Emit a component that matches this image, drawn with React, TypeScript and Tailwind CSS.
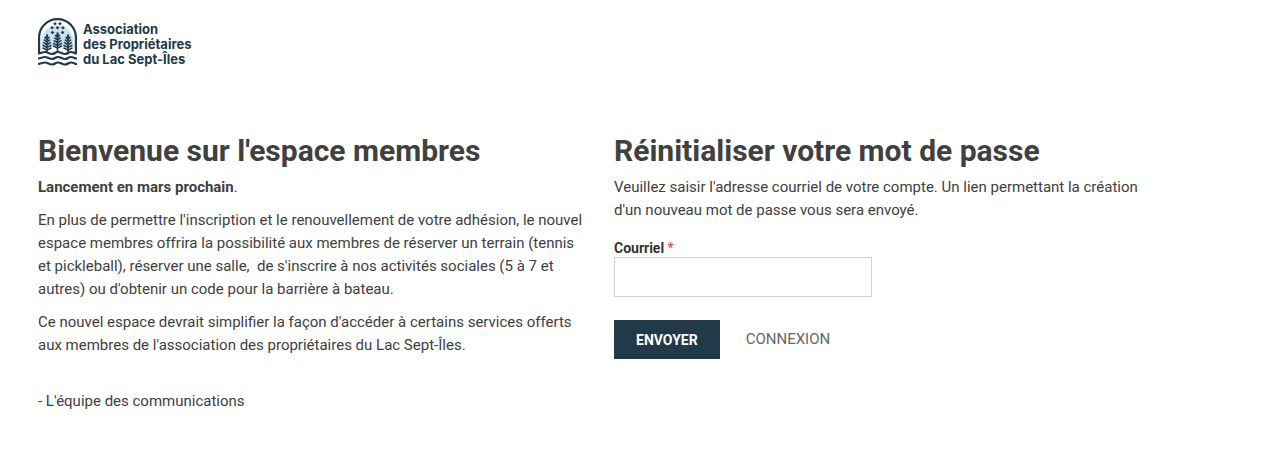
import React from 'react';

const NAVY = '#213a4a';

const TREES = [
  { x: 9, top: 16.5 },
  { x: 19.5, top: 14.5 },
  { x: 30, top: 16.5 },
];

const STARS = [
  [17, 5.7], [22, 5.7],
  [14, 9.7], [19.5, 9.7], [25, 9.7],
  [14.5, 14.5], [24.5, 14.5],
];

const Tree: React.FC<{ x: number; top: number }> = ({ x, top }) => (
  <g fill="none" stroke={NAVY}>
    <path d={`M${x} ${top}V35`} strokeWidth="1.5" />
    <path d={`M${x} ${top - 1}L${x + 1.6} ${top + 3}H${x - 1.6}Z`} fill={NAVY} stroke="none" />
    {[0, 1, 2, 3, 4].map((i) => {
      const y = top + 2.5 + i * 2.7;
      const w = Math.min(2.4 + i * 0.7, 4.5);
      return (
        <path key={i} d={`M${x - w} ${y}L${x} ${y + 2.4}L${x + w} ${y}`} strokeWidth="1.6" />
      );
    })}
  </g>
);

const LogoMark: React.FC = () => (
  <svg width="39" height="48" viewBox="0 0 39 48" fill="none" aria-hidden="true">
    <path d="M4.5 29A16 16 0 1 1 34.5 29Z" fill="#c9e2f1" />
    {STARS.map(([x, y]) => (
      <path
        key={`${x}-${y}`}
        d={`M${x} ${y - 1.8}L${x + 1.8} ${y}L${x} ${y + 1.8}L${x - 1.8} ${y}Z`}
        fill={NAVY}
      />
    ))}
    {TREES.map((tree) => (
      <Tree key={tree.x} {...tree} />
    ))}
    <g stroke={NAVY} strokeWidth="2.2">
      <path d="M1.1 36V19.5A18.4 18.4 0 0 1 37.9 19.5V36" />
      <path d="M0 35.5C3 35.5 4 34 7 34S11 36 14 36S17 34 20 34S24 36 27 36S30 34 33 34S36 35.5 39 35.5" />
      <path d="M0 40.5C3 40.5 4 39 7 39S11 41 14 41S17 39 20 39S24 41 27 41S30 39 33 39S36 40.5 39 40.5" />
      <path d="M0 46C3 46 4 44.5 7 44.5S11 46.5 14 46.5S17 44.5 20 44.5S24 46.5 27 46.5S30 44.5 33 44.5S36 46 39 46" />
    </g>
  </svg>
);

const Header: React.FC = () => (
  <header className="px-[38px] pt-[18px]">
    <a href="#" className="flex w-fit items-start gap-[6px] text-[#213a4a]">
      <LogoMark />
      <span className="pt-1 font-['Inter',sans-serif] text-[13px] font-bold leading-[15px]">
        Association
        <br />
        des Propriétaires
        <br />
        du Lac Sept-Îles
      </span>
    </a>
  </header>
);

const Welcome: React.FC = () => (
  <section>
    <h1 className="text-[30px] font-bold leading-[36px]">Bienvenue sur l'espace membres</h1>
    <div className="mt-[7px] space-y-[10px]">
      <p>
        <strong>Lancement en mars prochain</strong>.
      </p>
      <p>
        En plus de permettre l'inscription et le renouvellement de votre adhésion, le nouvel espace
        membres offrira la possibilité aux membres de réserver un terrain (tennis et pickleball),
        réserver une salle,&nbsp; de s'inscrire à nos activités sociales (5 à 7 et autres) ou
        d'obtenir un code pour la barrière à bateau.
      </p>
      <p>
        Ce nouvel espace devrait simplifier la façon d'accéder à certains services offerts aux
        membres de l'association des propriétaires du Lac Sept-Îles.
      </p>
    </div>
    <p className="mt-[33px]">- L'équipe des communications</p>
  </section>
);

const ResetPassword: React.FC = () => (
  <section>
    <h1 className="text-[30px] font-bold leading-[36px]">Réinitialiser votre mot de passe</h1>
    <p className="mt-[7px]">
      Veuillez saisir l'adresse courriel de votre compte. Un lien permettant la création d'un
      nouveau mot de passe vous sera envoyé.
    </p>
    <form className="mt-[17px]" onSubmit={(e) => e.preventDefault()}>
      <label htmlFor="email" className="block text-sm font-bold leading-[18px] text-[#333333]">
        Courriel <span className="font-normal text-[#f5333f]">*</span>
      </label>
      <input
        id="email"
        type="email"
        required
        className="block h-10 w-[258px] border border-[#d3d3d3] bg-white px-3 outline-none"
      />
      <div className="mt-[23px] flex items-center gap-[26px]">
        <button type="submit" className="h-[39px] bg-[#213a4a] px-[22px] text-sm font-bold text-white">
          ENVOYER
        </button>
        <a href="#" className="text-[#666666]">
          CONNEXION
        </a>
      </div>
    </form>
  </section>
);

const App: React.FC = () => (
  <div className="bg-white pb-10 font-['Roboto',sans-serif] text-[15px] leading-[23px] text-[#404040]">
    <Header />
    <main className="mt-[66px] grid max-w-[1204px] grid-cols-2 gap-6 px-[38px]">
      <Welcome />
      <ResetPassword />
    </main>
  </div>
);

export default App;
